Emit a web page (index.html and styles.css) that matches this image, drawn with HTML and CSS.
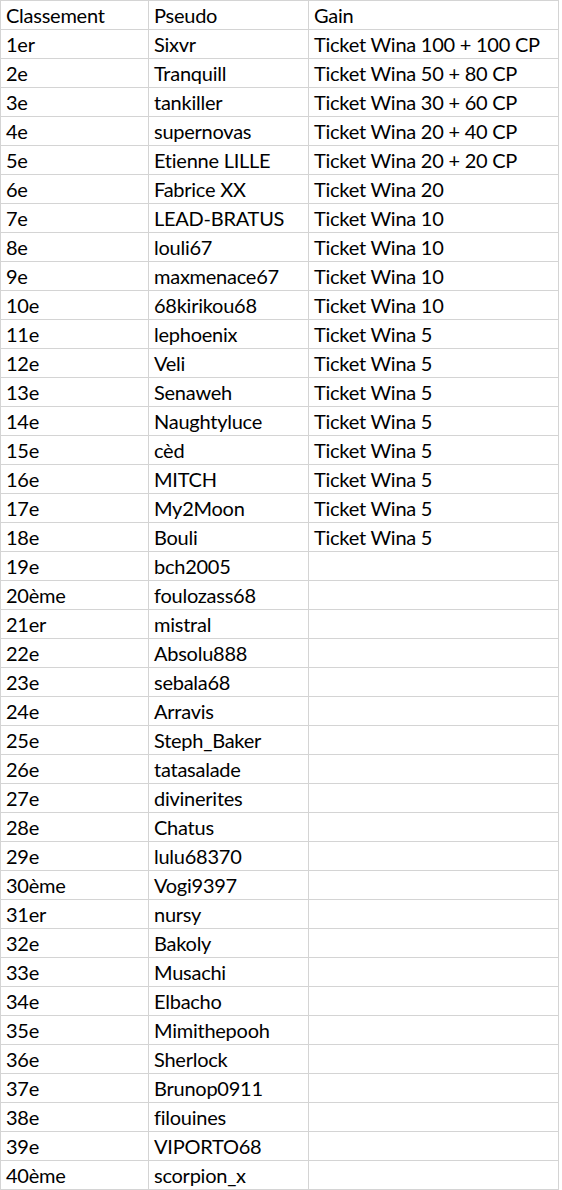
FILE: index.html
```html
<!DOCTYPE html>
<html lang="fr">
<head>
<meta charset="utf-8">
<title>Classement</title>
<link rel="stylesheet" href="styles.css">
</head>
<body>
<div class="sheet">
  <div class="cell">Classement</div><div class="cell">Pseudo</div><div class="cell">Gain</div>
  <div class="cell">1er</div><div class="cell">Sixvr</div><div class="cell">Ticket Wina 100 + 100 CP</div>
  <div class="cell">2e</div><div class="cell">Tranquill</div><div class="cell">Ticket Wina 50 + 80 CP</div>
  <div class="cell">3e</div><div class="cell">tankiller</div><div class="cell">Ticket Wina 30 + 60 CP</div>
  <div class="cell">4e</div><div class="cell">supernovas</div><div class="cell">Ticket Wina 20 + 40 CP</div>
  <div class="cell">5e</div><div class="cell">Etienne LILLE</div><div class="cell">Ticket Wina 20 + 20 CP</div>
  <div class="cell">6e</div><div class="cell">Fabrice XX</div><div class="cell">Ticket Wina 20</div>
  <div class="cell">7e</div><div class="cell">LEAD-BRATUS</div><div class="cell">Ticket Wina 10</div>
  <div class="cell">8e</div><div class="cell">louli67</div><div class="cell">Ticket Wina 10</div>
  <div class="cell">9e</div><div class="cell">maxmenace67</div><div class="cell">Ticket Wina 10</div>
  <div class="cell">10e</div><div class="cell">68kirikou68</div><div class="cell">Ticket Wina 10</div>
  <div class="cell">11e</div><div class="cell">lephoenix</div><div class="cell">Ticket Wina 5</div>
  <div class="cell">12e</div><div class="cell">Veli</div><div class="cell">Ticket Wina 5</div>
  <div class="cell">13e</div><div class="cell">Senaweh</div><div class="cell">Ticket Wina 5</div>
  <div class="cell">14e</div><div class="cell">Naughtyluce</div><div class="cell">Ticket Wina 5</div>
  <div class="cell">15e</div><div class="cell">cèd</div><div class="cell">Ticket Wina 5</div>
  <div class="cell">16e</div><div class="cell">MITCH</div><div class="cell">Ticket Wina 5</div>
  <div class="cell">17e</div><div class="cell">My2Moon</div><div class="cell">Ticket Wina 5</div>
  <div class="cell">18e</div><div class="cell">Bouli</div><div class="cell">Ticket Wina 5</div>
  <div class="cell">19e</div><div class="cell">bch2005</div><div class="cell"></div>
  <div class="cell">20ème</div><div class="cell">foulozass68</div><div class="cell"></div>
  <div class="cell">21er</div><div class="cell">mistral</div><div class="cell"></div>
  <div class="cell">22e</div><div class="cell">Absolu888</div><div class="cell"></div>
  <div class="cell">23e</div><div class="cell">sebala68</div><div class="cell"></div>
  <div class="cell">24e</div><div class="cell">Arravis</div><div class="cell"></div>
  <div class="cell">25e</div><div class="cell">Steph_Baker</div><div class="cell"></div>
  <div class="cell">26e</div><div class="cell">tatasalade</div><div class="cell"></div>
  <div class="cell">27e</div><div class="cell">divinerites</div><div class="cell"></div>
  <div class="cell">28e</div><div class="cell">Chatus</div><div class="cell"></div>
  <div class="cell">29e</div><div class="cell">lulu68370</div><div class="cell"></div>
  <div class="cell">30ème</div><div class="cell">Vogi9397</div><div class="cell"></div>
  <div class="cell">31er</div><div class="cell">nursy</div><div class="cell"></div>
  <div class="cell">32e</div><div class="cell">Bakoly</div><div class="cell"></div>
  <div class="cell">33e</div><div class="cell">Musachi</div><div class="cell"></div>
  <div class="cell">34e</div><div class="cell">Elbacho</div><div class="cell"></div>
  <div class="cell">35e</div><div class="cell">Mimithepooh</div><div class="cell"></div>
  <div class="cell">36e</div><div class="cell">Sherlock</div><div class="cell"></div>
  <div class="cell">37e</div><div class="cell">Brunop0911</div><div class="cell"></div>
  <div class="cell">38e</div><div class="cell">filouines</div><div class="cell"></div>
  <div class="cell">39e</div><div class="cell">VIPORTO68</div><div class="cell"></div>
  <div class="cell">40ème</div><div class="cell">scorpion_x</div><div class="cell"></div>
</div>
</body>
</html>
```

FILE: styles.css
```css
html, body {
  margin: 0;
  padding: 0;
  background: #ffffff;
}

.sheet {
  display: grid;
  grid-template-columns: 148px 160px 250px;
  grid-auto-rows: 29px;
  width: max-content;
  border-top: 1px solid #d4d4d4;
  border-left: 1px solid #d4d4d4;
  font-family: Lato, "Liberation Sans", sans-serif;
  font-size: 20px;
  letter-spacing: -0.25px;
  font-variant-ligatures: none;
  color: #000000;
}

.cell {
  box-sizing: border-box;
  border-right: 1px solid #d4d4d4;
  border-bottom: 1px solid #d4d4d4;
  padding-left: 5px;
  line-height: 28px;
  white-space: nowrap;
  overflow: hidden;
}
```
